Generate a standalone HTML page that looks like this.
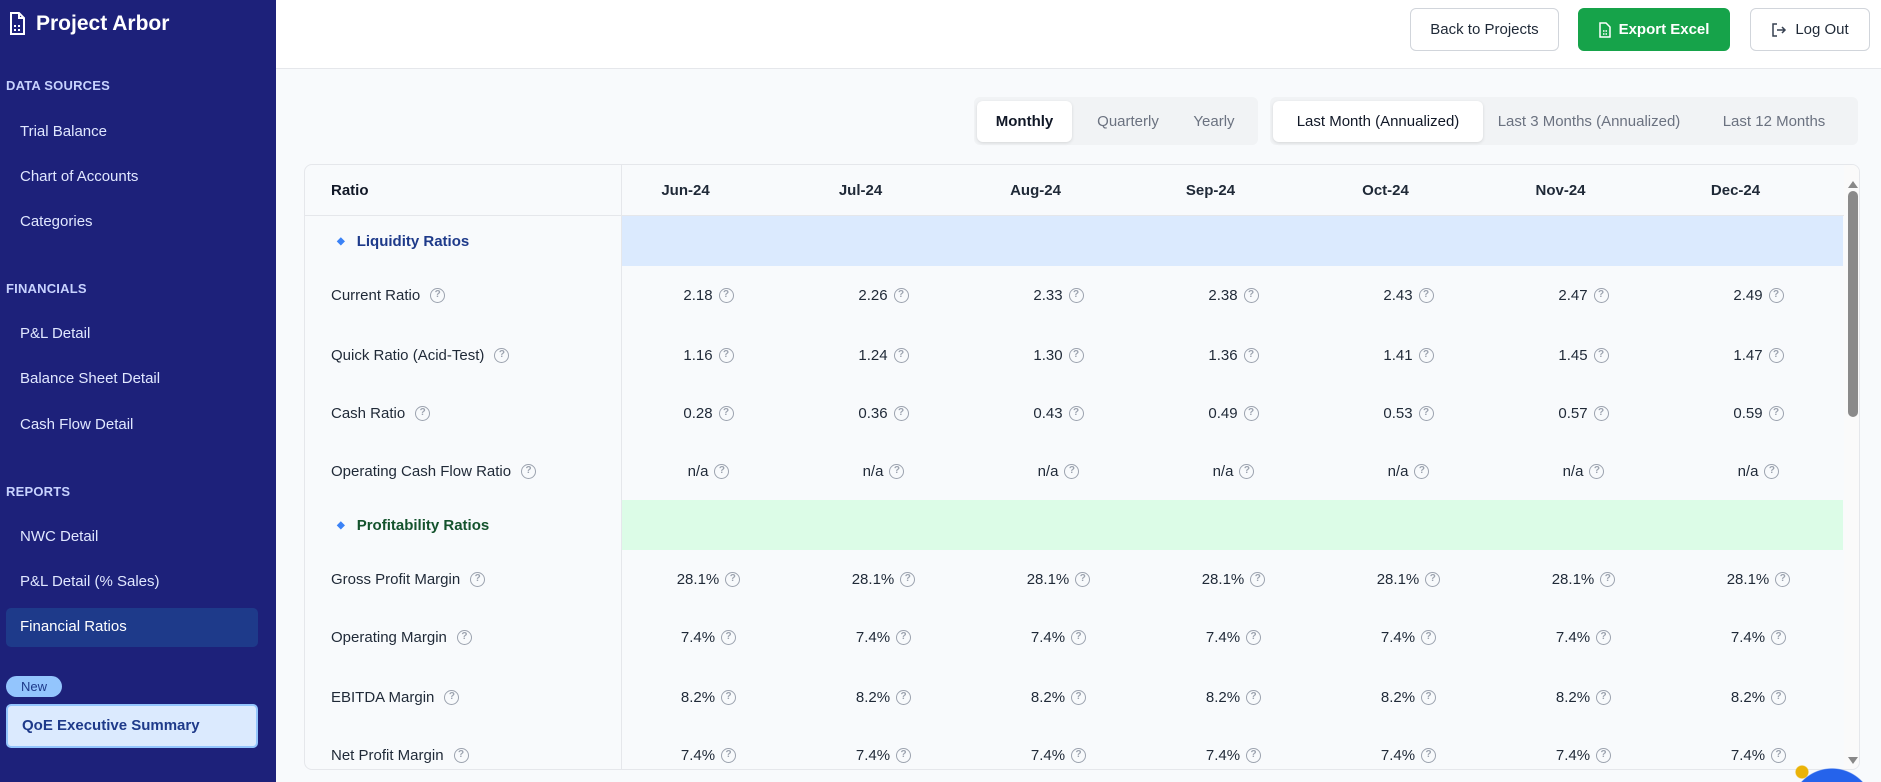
<!DOCTYPE html>
<html style="width:1881px;height:782px;overflow:hidden"><head><meta charset="utf-8"><style>
*{box-sizing:border-box;margin:0;padding:0}
body{width:1881px;height:782px;overflow:hidden;font-family:"Liberation Sans",sans-serif;background:#f8fafc;position:relative;color:#111827}
.sb{position:absolute;left:0;top:0;width:276px;height:782px;background:#1d217a;color:#e0e7ff}
.logo{position:absolute;left:9px;top:12px;display:flex;align-items:center;gap:11px;color:#fff;font-weight:bold;font-size:21px}
.sec{position:absolute;left:6px;font-size:13px;font-weight:bold;color:#c7d2fe;letter-spacing:.2px}
.it{position:absolute;left:20px;font-size:15px;color:#e0e7ff}
.act{position:absolute;left:6px;top:608px;width:252px;height:39px;background:#1e3a8a;border-radius:5px}
.new{position:absolute;left:6px;top:676px;width:56px;height:21px;background:#93c5fd;border-radius:11px;color:#1e3a8a;font-size:13px;text-align:center;line-height:21px}
.qoe{position:absolute;left:6px;top:704px;width:252px;height:44px;background:#dbeafe;border:2px solid #93c5fd;border-radius:5px;color:#1e3a8a;font-weight:bold;font-size:15px;padding-left:14px;line-height:40px}
.hdr{position:absolute;left:276px;top:0;right:0;height:69px;background:#fff;border-bottom:1px solid #e5e7eb}
.btn{position:absolute;top:8px;height:43px;border:1px solid #d1d5db;border-radius:6px;background:#fff;font-size:15px;display:flex;align-items:center;justify-content:center;gap:8px;color:#1f2937}
.tabs{position:absolute;top:97px;height:48px;background:#f1f3f5;border-radius:6px}
.tab{position:absolute;top:4px;height:41px;font-size:15px;color:#6b7280;line-height:41px;text-align:center}
.tab.on{background:#fff;color:#111827;border-radius:6px;box-shadow:0 1px 3px rgba(0,0,0,.12)}
.card{position:absolute;left:304px;top:164px;width:1556px;height:606px;border:1px solid #e5e7eb;border-radius:8px;background:#f8fafc;overflow:hidden}
.row{position:absolute;left:0;width:1539px;display:flex;align-items:center}
.c0{position:absolute;left:26px;font-size:15px;color:#1f2937;display:flex;align-items:center}
.v{position:absolute;width:175px;text-align:center;font-size:15px;color:#1f2937;display:flex;justify-content:center;align-items:center}
.q{display:inline-block;width:15px;height:15px;border:1.5px solid #9ca3af;border-radius:50%;color:#9ca3af;font-size:10px;line-height:12px;text-align:center;margin-left:6px;font-weight:bold}
.vl{position:absolute;left:316px;top:0;width:1px;height:606px;background:#e5e7eb}
.clip{position:absolute;left:1780px;top:760px;width:101px;height:22px;background:radial-gradient(circle at 52px 50px,#2563eb 41px,transparent 42px),radial-gradient(circle at 22px 12px,#eab308 6px,transparent 7px)}
</style></head><body>
<div class="sb">
<div class="logo"><svg width="16" height="24" viewBox="0 0 16 24" fill="none" stroke="#fff" stroke-width="2"><path d="M2 1h8l5 5v16H2z"/><path d="M10 1v5h5"/><path d="M5 14h2M9 14h2M5 18h2M9 18h2"/></svg><span>Project Arbor</span></div>
<div class="sec" style="top:78px">DATA SOURCES</div>
<div class="it" style="top:123px">Trial Balance</div>
<div class="it" style="top:168px">Chart of Accounts</div>
<div class="it" style="top:213px">Categories</div>
<div class="sec" style="top:281px">FINANCIALS</div>
<div class="it" style="top:325px">P&amp;L Detail</div>
<div class="it" style="top:370px">Balance Sheet Detail</div>
<div class="it" style="top:416px">Cash Flow Detail</div>
<div class="sec" style="top:484px">REPORTS</div>
<div class="it" style="top:528px">NWC Detail</div>
<div class="it" style="top:573px">P&amp;L Detail (% Sales)</div>
<div class="act"></div>
<div class="it" style="top:618px;color:#fff">Financial Ratios</div>
<div class="new">New</div>
<div class="qoe">QoE Executive Summary</div>
</div>
<div class="hdr"></div>
<div class="btn" style="left:1410px;width:149px">Back to Projects</div>
<div class="btn" style="left:1578px;width:152px;background:#16a34a;border-color:#16a34a;color:#fff;font-weight:bold"><svg width="12" height="16" viewBox="0 0 12 16" fill="none" stroke="#fff" stroke-width="1.5"><path d="M1 1h6l4 4v10H1z"/><path d="M4 9h1.5M6.5 9h1.5M4 12h1.5M6.5 12h1.5"/></svg>Export Excel</div>
<div class="btn" style="left:1750px;width:120px"><svg width="16" height="16" viewBox="0 0 16 16" fill="none" stroke="#374151" stroke-width="1.5"><path d="M6 2H2v12h4M6 8h8M11 5l3 3-3 3"/></svg>Log Out</div>
<div class="tabs" style="left:974px;width:284px">
<div class="tab on" style="left:3px;width:95px;font-weight:bold">Monthly</div>
<div class="tab" style="left:104px;width:100px">Quarterly</div>
<div class="tab" style="left:204px;width:72px">Yearly</div>
</div>
<div class="tabs" style="left:1270px;width:588px">
<div class="tab on" style="left:3px;width:210px">Last Month (Annualized)</div>
<div class="tab" style="left:216px;width:206px">Last 3 Months (Annualized)</div>
<div class="tab" style="left:424px;width:160px">Last 12 Months</div>
</div>
<div class="card">
<div style="position:absolute;left:0;top:0;width:1539px;height:51px;border-bottom:1px solid #e5e7eb"></div>
<div class="row" style="top:0;height:51px;font-weight:bold">
<div class="c0" style="font-weight:bold;color:#111827">Ratio</div>
<div class="v" style="left:293px;font-weight:bold">Jun-24</div><div class="v" style="left:468px;font-weight:bold">Jul-24</div><div class="v" style="left:643px;font-weight:bold">Aug-24</div><div class="v" style="left:818px;font-weight:bold">Sep-24</div><div class="v" style="left:993px;font-weight:bold">Oct-24</div><div class="v" style="left:1168px;font-weight:bold">Nov-24</div><div class="v" style="left:1343px;font-weight:bold">Dec-24</div>
</div>
<div style="position:absolute;left:316px;top:51px;width:1222px;height:50px;background:#dbeafe"></div>
<div class="c0" style="top:68px;left:32px;color:#1e3a8a;font-weight:bold"><span style="color:#3b82f6;font-size:10px;margin-right:12px">◆</span>Liquidity Ratios</div>
<div style="position:absolute;left:316px;top:335px;width:1222px;height:50px;background:#dcfce7"></div>
<div class="c0" style="top:352px;left:32px;color:#14532d;font-weight:bold"><span style="color:#3b82f6;font-size:10px;margin-right:12px">◆</span>Profitability Ratios</div>
<div class="vl"></div>
<div id="rows"></div>
<div style="position:absolute;left:1539px;top:0;width:17px;height:606px;background:#fafafa"></div>
<div style="position:absolute;left:1543px;top:16px;width:0;height:0;border-left:5px solid transparent;border-right:5px solid transparent;border-bottom:7px solid #888"></div>
<div style="position:absolute;left:1543px;top:26px;width:10px;height:226px;background:#8a8a8a;border-radius:5px"></div>
<div style="position:absolute;left:1543px;top:592px;width:0;height:0;border-left:5px solid transparent;border-right:5px solid transparent;border-top:7px solid #888"></div>
</div>
<div class="clip"></div>
<script>
var data=[["Current Ratio",130,["2.18","2.26","2.33","2.38","2.43","2.47","2.49"]],
["Quick Ratio (Acid-Test)",190,["1.16","1.24","1.30","1.36","1.41","1.45","1.47"]],
["Cash Ratio",248,["0.28","0.36","0.43","0.49","0.53","0.57","0.59"]],
["Operating Cash Flow Ratio",306,["n/a","n/a","n/a","n/a","n/a","n/a","n/a"]],
["Gross Profit Margin",414,["28.1%","28.1%","28.1%","28.1%","28.1%","28.1%","28.1%"]],
["Operating Margin",472,["7.4%","7.4%","7.4%","7.4%","7.4%","7.4%","7.4%"]],
["EBITDA Margin",532,["8.2%","8.2%","8.2%","8.2%","8.2%","8.2%","8.2%"]],
["Net Profit Margin",590,["7.4%","7.4%","7.4%","7.4%","7.4%","7.4%","7.4%"]]];
var h="";data.forEach(function(r){h+='<div class="row" style="top:'+(r[1]-15)+'px;height:30px"><div class="c0">'+r[0]+'<span class="q" style="margin-left:10px">?</span></div>';
r[2].forEach(function(v,i){h+='<div class="v" style="left:'+(316+i*175)+'px">'+v+'<span class="q">?</span></div>'});h+='</div>'});
document.getElementById("rows").innerHTML=h;
</script>
</body></html>
